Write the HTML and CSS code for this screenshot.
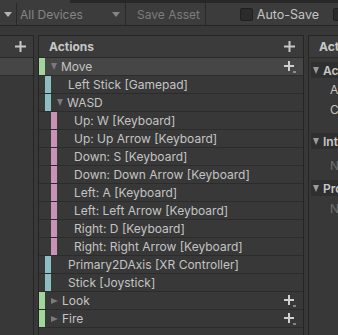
FILE: index.html
```html
<!DOCTYPE html>
<html lang="en">
<head>
    <meta charset="UTF-8">
    <meta name="viewport" content="width=device-width, initial-scale=1.0">
    <title>Input Actions</title>
    <link rel="stylesheet" href="styles.css">
</head>
<body>
    <div class="tabstrip"><div class="tab"></div></div>

    <!-- Toolbar -->
    <div class="toolbar">
        <div class="tool-drop scheme"><span class="caret"></span></div>
        <div class="tool-drop devices"><span class="tool-label">All Devices</span><span class="caret"></span></div>
        <div class="tool-btn">Save Asset</div>
        <div class="tool-space"></div>
        <div class="toggle"><span class="check"></span><span class="toggle-label">Auto-Save</span></div>
        <span class="check edge"></span>
    </div>

    <div class="workspace">
        <!-- Action Maps -->
        <div class="panel maps">
            <div class="panel-head">
                <span class="head-title"></span>
                <svg class="plus" width="11" height="11" viewBox="0 0 11 11"><path d="M5.5 0v11M0 5.5h11" stroke="#c8c8c8" stroke-width="2"/></svg>
            </div>
            <div class="map-row selected"></div>
        </div>

        <!-- Actions -->
        <div class="panel actions">
            <div class="panel-head">
                <span class="head-title">Actions</span>
                <svg class="plus" width="11" height="11" viewBox="0 0 11 11"><path d="M5.5 0v11M0 5.5h11" stroke="#c8c8c8" stroke-width="2"/></svg>
            </div>
            <div class="tree">
                <div class="row selected">
                    <span class="bar action"></span><span class="arrow open"></span><span class="name">Move</span>
                    <svg class="add" width="13" height="12" viewBox="0 0 13 12"><path d="M5 0v10M0 5h10" stroke="#d0d0d0" stroke-width="2"/><path d="M9 11h3" stroke="#d0d0d0" stroke-width="1"/></svg>
                </div>
                <div class="row lvl1"><span class="bar binding"></span><span class="name leaf">Left Stick [Gamepad]</span></div>
                <div class="row lvl1"><span class="bar binding"></span><span class="arrow open"></span><span class="name">WASD</span></div>
                <div class="row lvl2"><span class="bar part"></span><span class="name leaf">Up: W [Keyboard]</span></div>
                <div class="row lvl2"><span class="bar part"></span><span class="name leaf">Up: Up Arrow [Keyboard]</span></div>
                <div class="row lvl2"><span class="bar part"></span><span class="name leaf">Down: S [Keyboard]</span></div>
                <div class="row lvl2"><span class="bar part"></span><span class="name leaf">Down: Down Arrow [Keyboard]</span></div>
                <div class="row lvl2"><span class="bar part"></span><span class="name leaf">Left: A [Keyboard]</span></div>
                <div class="row lvl2"><span class="bar part"></span><span class="name leaf">Left: Left Arrow [Keyboard]</span></div>
                <div class="row lvl2"><span class="bar part"></span><span class="name leaf">Right: D [Keyboard]</span></div>
                <div class="row lvl2"><span class="bar part"></span><span class="name leaf">Right: Right Arrow [Keyboard]</span></div>
                <div class="row lvl1"><span class="bar binding"></span><span class="name leaf">Primary2DAxis [XR Controller]</span></div>
                <div class="row lvl1"><span class="bar binding"></span><span class="name leaf">Stick [Joystick]</span></div>
                <div class="row">
                    <span class="bar action"></span><span class="arrow"></span><span class="name">Look</span>
                    <svg class="add" width="13" height="12" viewBox="0 0 13 12"><path d="M5 0v10M0 5h10" stroke="#d0d0d0" stroke-width="2"/><path d="M9 11h3" stroke="#d0d0d0" stroke-width="1"/></svg>
                </div>
                <div class="row">
                    <span class="bar action"></span><span class="arrow"></span><span class="name">Fire</span>
                    <svg class="add" width="13" height="12" viewBox="0 0 13 12"><path d="M5 0v10M0 5h10" stroke="#d0d0d0" stroke-width="2"/><path d="M9 11h3" stroke="#d0d0d0" stroke-width="1"/></svg>
                </div>
            </div>
        </div>

        <!-- Properties -->
        <div class="panel props">
            <div class="panel-head"><span class="head-title">Action Properties</span></div>
            <div class="fold action-fold"><span class="arrow open"></span>Action</div>
            <div class="prop">Action Type</div>
            <div class="prop">Control Type</div>
            <div class="fold int-fold"><span class="arrow open"></span>Interactions</div>
            <div class="prop dim int-empty">No Interactions have been added.</div>
            <div class="fold proc-fold"><span class="arrow open"></span>Processors</div>
            <div class="prop dim proc-empty">No Processors have been added.</div>
        </div>
    </div>
</body>
</html>
```

FILE: styles.css
```css
body {
    margin: 0;
    width: 338px;
    height: 335px;
    overflow: hidden;
    background-color: #383838;
    color: #c4c4c4;
    font-family: Inter, 'Noto Sans', sans-serif;
    font-size: 12px;
}

/* Tab strip above the toolbar */
.tabstrip {
    height: 3px;
    background-color: #282828;
}

.tabstrip .tab {
    width: 70px;
    height: 3px;
    background-color: #3c3c3c;
}

/* Toolbar */
.toolbar {
    display: flex;
    align-items: center;
    height: 22px;
    background-color: #3c3c3c;
    border-bottom: 1px solid #252525;
    font-size: 12px;
    white-space: nowrap;
}

.tool-drop {
    display: flex;
    align-items: center;
    height: 100%;
    border-right: 1px solid #2a2a2a;
    box-sizing: border-box;
}

.tool-drop.scheme {
    width: 17px;
    padding-left: 4px;
}

.tool-drop.devices {
    width: 109px;
    padding-left: 3px;
    padding-right: 5px;
    justify-content: space-between;
}

.tool-label {
    color: #858585;
}

.caret {
    width: 0;
    height: 0;
    border-left: 4px solid transparent;
    border-right: 4px solid transparent;
    border-top: 5px solid #b4b4b4;
}

.devices .caret {
    border-top-color: #858585;
}

.tool-btn {
    display: flex;
    align-items: center;
    height: 100%;
    width: 80px;
    padding-left: 11px;
    box-sizing: border-box;
    color: #7c7c7c;
    border-right: 1px solid #2a2a2a;
}

.tool-space {
    flex-grow: 1;
}

.toggle {
    display: flex;
    align-items: center;
    gap: 4px;
    margin-right: 14px;
}

.toggle-label {
    color: #c4c4c4;
    font-size: 12.5px;
}

.check {
    width: 11px;
    height: 11px;
    flex-shrink: 0;
    background-color: #2b2b2b;
    border: 1px solid #1f1f1f;
    border-radius: 2px;
}

.check.edge {
    margin-right: -8px;
}

/* Panels */
.workspace {
    display: flex;
    gap: 4px;
    padding-top: 9px;
    height: 310px;
}

.panel {
    display: flex;
    flex-direction: column;
    box-sizing: border-box;
    border-top: 1px solid #252525;
    flex-shrink: 0;
}

.panel.maps {
    width: 34px;
    border-right: 1px solid #252525;
}

.panel.actions {
    width: 266px;
    border-left: 1px solid #252525;
    border-right: 1px solid #252525;
}

.panel.props {
    width: 40px;
    border-left: 1px solid #252525;
    white-space: nowrap;
    overflow: hidden;
}

.panel-head {
    display: flex;
    align-items: center;
    justify-content: space-between;
    height: 21px;
    padding: 0 8px 0 10px;
    background-color: #3b3b3b;
    border-bottom: 1px solid #2a2a2a;
    flex-shrink: 0;
}

.head-title {
    font-weight: 700;
    color: #c8c8c8;
}

.maps .panel-head {
    padding: 0 7px 0 0;
}

.map-row {
    height: 17px;
    border-bottom: 1px solid #2c2c2c;
}

.map-row.selected {
    background-color: #464646;
}

/* Action tree */
.row {
    display: flex;
    align-items: center;
    height: 17px;
    border-bottom: 1px solid #2c2c2c;
    padding-right: 6px;
}

.row.selected {
    background-color: #464646;
}

.row.lvl1 {
    padding-left: 6px;
}

.row.lvl2 {
    padding-left: 12px;
}

.bar {
    width: 6px;
    height: 100%;
    flex-shrink: 0;
}

.bar.action {
    background-color: #a2d59c;
}

.bar.binding {
    background-color: #8dbfc2;
}

.bar.part {
    background-color: #c893b5;
}

.arrow {
    width: 0;
    height: 0;
    margin-left: 6px;
    margin-right: 4px;
    border-top: 3.5px solid transparent;
    border-bottom: 3.5px solid transparent;
    border-left: 7px solid #7a7a7a;
}

.arrow.open {
    border-left: 3.5px solid transparent;
    border-right: 3.5px solid transparent;
    border-top: 7px solid #7a7a7a;
    border-bottom: 0;
}

.name {
    flex-grow: 1;
    white-space: nowrap;
}

.name.leaf {
    margin-left: 17px;
}

.add {
    flex-shrink: 0;
    margin-top: 1px;
}

/* Properties */
.fold {
    display: flex;
    align-items: center;
    height: 16px;
    margin: 0 0 2px 2px;
    padding-left: 2px;
    background-color: #2f2f2f;
    font-weight: 600;
    color: #c8c8c8;
    flex-shrink: 0;
}

.fold .arrow {
    margin-left: 0;
    margin-right: 4px;
    border-top-color: #9a9a9a;
}

.action-fold {
    margin-top: 4px;
}

.int-fold {
    margin-top: 13px;
}

.proc-fold {
    margin-top: 4px;
}

.prop {
    height: 20px;
    line-height: 20px;
    padding-left: 21px;
    flex-shrink: 0;
}

.prop.dim {
    color: #6e6e6e;
}

.int-empty {
    margin-top: 5px;
}

.proc-empty {
    margin-top: 1px;
}
```
